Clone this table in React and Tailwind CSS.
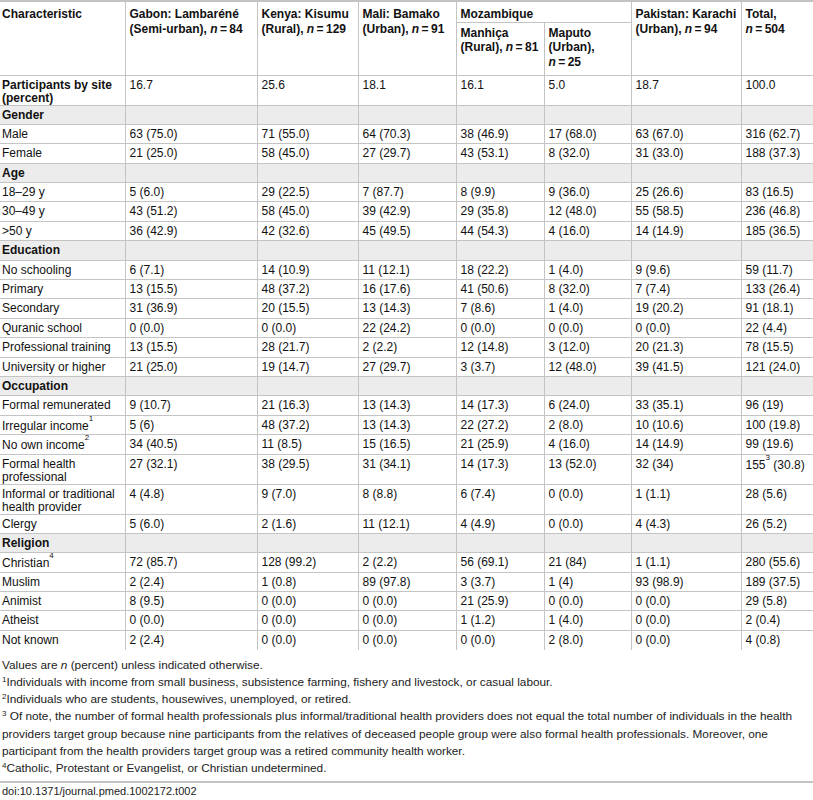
const rows = [
  { label: "Participants by site (percent)", bold: true, values: ["16.7", "25.6", "18.1", "16.1", "5.0", "18.7", "100.0"] },
  { section: "Gender" },
  { label: "Male", values: ["63 (75.0)", "71 (55.0)", "64 (70.3)", "38 (46.9)", "17 (68.0)", "63 (67.0)", "316 (62.7)"] },
  { label: "Female", values: ["21 (25.0)", "58 (45.0)", "27 (29.7)", "43 (53.1)", "8 (32.0)", "31 (33.0)", "188 (37.3)"] },
  { section: "Age" },
  { label: "18–29 y", values: ["5 (6.0)", "29 (22.5)", "7 (87.7)", "8 (9.9)", "9 (36.0)", "25 (26.6)", "83 (16.5)"] },
  { label: "30–49 y", values: ["43 (51.2)", "58 (45.0)", "39 (42.9)", "29 (35.8)", "12 (48.0)", "55 (58.5)", "236 (46.8)"] },
  { label: ">50 y", values: ["36 (42.9)", "42 (32.6)", "45 (49.5)", "44 (54.3)", "4 (16.0)", "14 (14.9)", "185 (36.5)"] },
  { section: "Education" },
  { label: "No schooling", values: ["6 (7.1)", "14 (10.9)", "11 (12.1)", "18 (22.2)", "1 (4.0)", "9 (9.6)", "59 (11.7)"] },
  { label: "Primary", values: ["13 (15.5)", "48 (37.2)", "16 (17.6)", "41 (50.6)", "8 (32.0)", "7 (7.4)", "133 (26.4)"] },
  { label: "Secondary", values: ["31 (36.9)", "20 (15.5)", "13 (14.3)", "7 (8.6)", "1 (4.0)", "19 (20.2)", "91 (18.1)"] },
  { label: "Quranic school", values: ["0 (0.0)", "0 (0.0)", "22 (24.2)", "0 (0.0)", "0 (0.0)", "0 (0.0)", "22 (4.4)"] },
  { label: "Professional training", values: ["13 (15.5)", "28 (21.7)", "2 (2.2)", "12 (14.8)", "3 (12.0)", "20 (21.3)", "78 (15.5)"] },
  { label: "University or higher", values: ["21 (25.0)", "19 (14.7)", "27 (29.7)", "3 (3.7)", "12 (48.0)", "39 (41.5)", "121 (24.0)"] },
  { section: "Occupation" },
  { label: "Formal remunerated", values: ["9 (10.7)", "21 (16.3)", "13 (14.3)", "14 (17.3)", "6 (24.0)", "33 (35.1)", "96 (19)"] },
  { label: "Irregular income", sup: "1", values: ["5 (6)", "48 (37.2)", "13 (14.3)", "22 (27.2)", "2 (8.0)", "10 (10.6)", "100 (19.8)"] },
  { label: "No own income", sup: "2", values: ["34 (40.5)", "11 (8.5)", "15 (16.5)", "21 (25.9)", "4 (16.0)", "14 (14.9)", "99 (19.6)"] },
  { label: "Formal health professional", values: ["27 (32.1)", "38 (29.5)", "31 (34.1)", "14 (17.3)", "13 (52.0)", "32 (34)", "155³ (30.8)"] },
  { label: "Informal or traditional health provider", values: ["4 (4.8)", "9 (7.0)", "8 (8.8)", "6 (7.4)", "0 (0.0)", "1 (1.1)", "28 (5.6)"] },
  { label: "Clergy", values: ["5 (6.0)", "2 (1.6)", "11 (12.1)", "4 (4.9)", "0 (0.0)", "4 (4.3)", "26 (5.2)"] },
  { section: "Religion" },
  { label: "Christian", sup: "4", values: ["72 (85.7)", "128 (99.2)", "2 (2.2)", "56 (69.1)", "21 (84)", "1 (1.1)", "280 (55.6)"] },
  { label: "Muslim", values: ["2 (2.4)", "1 (0.8)", "89 (97.8)", "3 (3.7)", "1 (4)", "93 (98.9)", "189 (37.5)"] },
  { label: "Animist", values: ["8 (9.5)", "0 (0.0)", "0 (0.0)", "21 (25.9)", "0 (0.0)", "0 (0.0)", "29 (5.8)"] },
  { label: "Atheist", values: ["0 (0.0)", "0 (0.0)", "0 (0.0)", "1 (1.2)", "1 (4.0)", "0 (0.0)", "2 (0.4)"] },
  { label: "Not known", values: ["2 (2.4)", "0 (0.0)", "0 (0.0)", "0 (0.0)", "2 (8.0)", "0 (0.0)", "4 (0.8)"] },
];

function Value({ text }) {
  // "155³ (30.8)" keeps its footnote mark as a superscript
  if (text.includes("³")) {
    const [num, rest] = text.split("³");
    return (
      <>
        {num}
        <sup className="text-[8px] align-super leading-none">3</sup>
        {rest}
      </>
    );
  }
  return text;
}

// n = 84 style, with narrow non-breaking spaces round the sign
const N = ({ v }) => (
  <span className="whitespace-nowrap">
    <i>n</i>{"\u202F=\u202F"}{v}
  </span>
);

export default function App() {
  const th = "align-top text-left font-bold pl-[4px] pr-[2px] pt-[5px] border-l border-[#c4c4c4]";
  const sub = "align-top text-left font-bold pl-[4px] pr-[2px] pt-[3px] border-l border-[#c4c4c4]";
  const td = "align-top pl-[4px] pr-[2px] pt-[3px] border-l border-[#c4c4c4]";
  const first = "align-top pl-[2px] pr-[2px] pt-[3px]";

  return (
    <div className="w-[813px] bg-white text-[#111] font-['Liberation_Sans',Arial,sans-serif]">
      <table className="w-[813px] table-fixed border-collapse text-[12px] leading-[13px]">
        <colgroup>
          <col className="w-[125px]" />
          <col className="w-[132px]" />
          <col className="w-[101px]" />
          <col className="w-[98px]" />
          <col className="w-[88px]" />
          <col className="w-[87px]" />
          <col className="w-[110px]" />
          <col className="w-[72px]" />
        </colgroup>
        <thead className="leading-[14.5px]">
          <tr className="h-[21px] border-t-2 border-[#c4c4c4]">
            <th rowSpan={2} className="align-top text-left font-bold pl-[2px] pr-[2px] pt-[5px]">Characteristic</th>
            <th rowSpan={2} className={th}>Gabon: Lambaréné (Semi-urban), <N v="84" /></th>
            <th rowSpan={2} className={th}>Kenya: Kisumu (Rural), <N v="129" /></th>
            <th rowSpan={2} className={th}>Mali: Bamako (Urban), <N v="91" /></th>
            <th colSpan={2} className={`${th} border-b border-b-[#c4c4c4]`}>Mozambique</th>
            <th rowSpan={2} className={th}>Pakistan: Karachi (Urban), <N v="94" /></th>
            <th rowSpan={2} className={th}>Total, <N v="504" /></th>
          </tr>
          <tr className="h-[53px] border-b border-[#c4c4c4]">
            <th className={sub}>Manhiça (Rural), <N v="81" /></th>
            <th className={sub}>Maputo (Urban), <N v="25" /></th>
          </tr>
        </thead>
        <tbody>
          {rows.map((r, i) =>
            r.section ? (
              <tr key={i} className="h-[19.4px] bg-[#ececec] border-b border-[#c4c4c4]">
                <td className={`${first} font-bold`}>{r.section}</td>
                {Array.from({ length: 7 }).map((_, j) => (
                  <td key={j} className={td}></td>
                ))}
              </tr>
            ) : (
              <tr key={i} className={`h-[19.4px] ${i === rows.length - 1 ? "" : "border-b border-[#c4c4c4]"}`}>
                <td className={`${first} ${r.bold ? "font-bold" : ""}`}>
                  {r.label}
                  {r.sup && <sup className="text-[8px] align-super leading-none">{r.sup}</sup>}
                </td>
                {r.values.map((v, j) => (
                  <td key={j} className={td}>
                    <Value text={v} />
                  </td>
                ))}
              </tr>
            )
          )}
        </tbody>
      </table>

      <div className="mt-[7px] px-[2px] text-[11.8px] leading-[17.2px] text-[#222]">
        <p>Values are <i>n</i> (percent) unless indicated otherwise.</p>
        <p><sup className="text-[8px]">1</sup>Individuals with income from small business, subsistence farming, fishery and livestock, or casual labour.</p>
        <p><sup className="text-[8px]">2</sup>Individuals who are students, housewives, unemployed, or retired.</p>
        <p>
          <sup className="text-[8px]">3</sup> Of note, the number of formal health professionals plus informal/traditional health providers does not equal the total number of individuals in the health providers target group because nine participants from the relatives of deceased people group were also formal health professionals. Moreover, one participant from the health providers target group was a retired community health worker.
        </p>
        <p><sup className="text-[8px]">4</sup>Catholic, Protestant or Evangelist, or Christian undetermined.</p>
      </div>

      <div className="mt-[4px] border-t-2 border-[#c4c4c4] px-[2px] pt-[1px] text-[11px] leading-[14px] text-[#222]">
        doi:10.1371/journal.pmed.1002172.t002
      </div>
    </div>
  );
}
